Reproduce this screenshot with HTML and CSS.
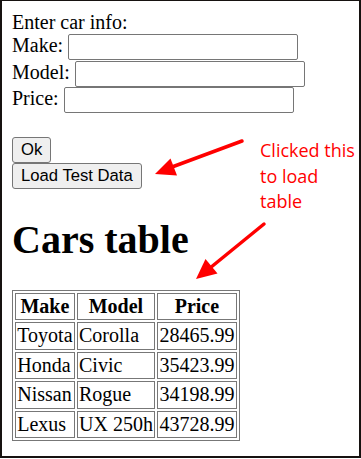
FILE: index.html
```html
<!DOCTYPE html>
<html lang="en">
<head>
  <meta charset="UTF-8" />
  <title>Cars</title>
  <link rel="stylesheet" href="styles.css">
</head>
<body>
  <div class="frame">
    <div class="car-form">
      <div>Enter car info:</div>
      <div class="row"><label for="make">Make:</label> <input id="make" type="text"></div>
      <div class="row"><label for="model">Model:</label> <input id="model" type="text"></div>
      <div class="row"><label for="price">Price:</label> <input id="price" type="text"></div>
      <br>
      <div class="btn-row"><button>Ok</button></div>
      <div class="btn-row"><button>Load Test Data</button></div>
    </div>

    <h1>Cars table</h1>
    <table class="cars">
      <tr><th>Make</th><th>Model</th><th>Price</th></tr>
      <tr><td>Toyota</td><td>Corolla</td><td>28465.99</td></tr>
      <tr><td>Honda</td><td>Civic</td><td>35423.99</td></tr>
      <tr><td>Nissan</td><td>Rogue</td><td>34198.99</td></tr>
      <tr><td>Lexus</td><td>UX 250h</td><td>43728.99</td></tr>
    </table>
  </div>

  <!-- annotation drawn over the screenshot -->
  <div class="note">Clicked this<br>to load<br>table</div>
  <svg class="arrows" width="361" height="459" viewBox="0 0 361 459">
    <line x1="242" y1="141" x2="172" y2="167" stroke="#ff0000" stroke-width="3.5" stroke-linecap="round"/>
    <polygon points="155,174 177,175.5 170.5,158.5" fill="#ff0000"/>
    <line x1="264" y1="224" x2="210" y2="268" stroke="#ff0000" stroke-width="3.5" stroke-linecap="round"/>
    <polygon points="196,279 217.5,273.5 205.5,259" fill="#ff0000"/>
  </svg>
</body>
</html>
```

FILE: styles.css
```css
body {
  margin: 0;
  position: relative;
  font-family: "Liberation Serif", "Times New Roman", serif;
  font-size: 20px;
  color: #000;
  background: #fff;
}
.frame {
  width: 361px;
  height: 458px;
  box-sizing: border-box;
  border: solid #161210;
  border-width: 1px 2px 2px 2px;
  padding: 10px;
}
.row {
  height: 26.5px;
}
input {
  width: 230px;
  height: 26px;
  box-sizing: border-box;
  padding: 1px 2px;
  border: 1px solid #767676;
  border-radius: 2px;
  font-family: "Liberation Sans", Arial, sans-serif;
  font-size: 16.67px;
}
.btn-row {
  height: 26px;
}
button {
  height: 26px;
  padding: 0 8px;
  font-family: "Liberation Sans", Arial, sans-serif;
  font-size: 16.67px;
  color: #000;
  background-color: #efefef;
  border: 1px solid #767676;
  border-radius: 3px;
}
h1 {
  font-size: 40px;
  margin: 27px 0;
}
.cars {
  border: 1px solid #777;
  border-spacing: 2.5px;
}
.cars th,
.cars td {
  border: 1px solid #777;
  padding: 1.25px;
  height: 27px;
  box-sizing: border-box;
}
.cars td {
  text-align: left;
}
.note {
  position: absolute;
  left: 260px;
  top: 138px;
  font-family: "Open Sans", "Noto Sans", sans-serif;
  font-size: 18px;
  line-height: 25.5px;
  color: #ff0000;
}
.arrows {
  position: absolute;
  left: 0;
  top: 0;
  pointer-events: none;
}
```
